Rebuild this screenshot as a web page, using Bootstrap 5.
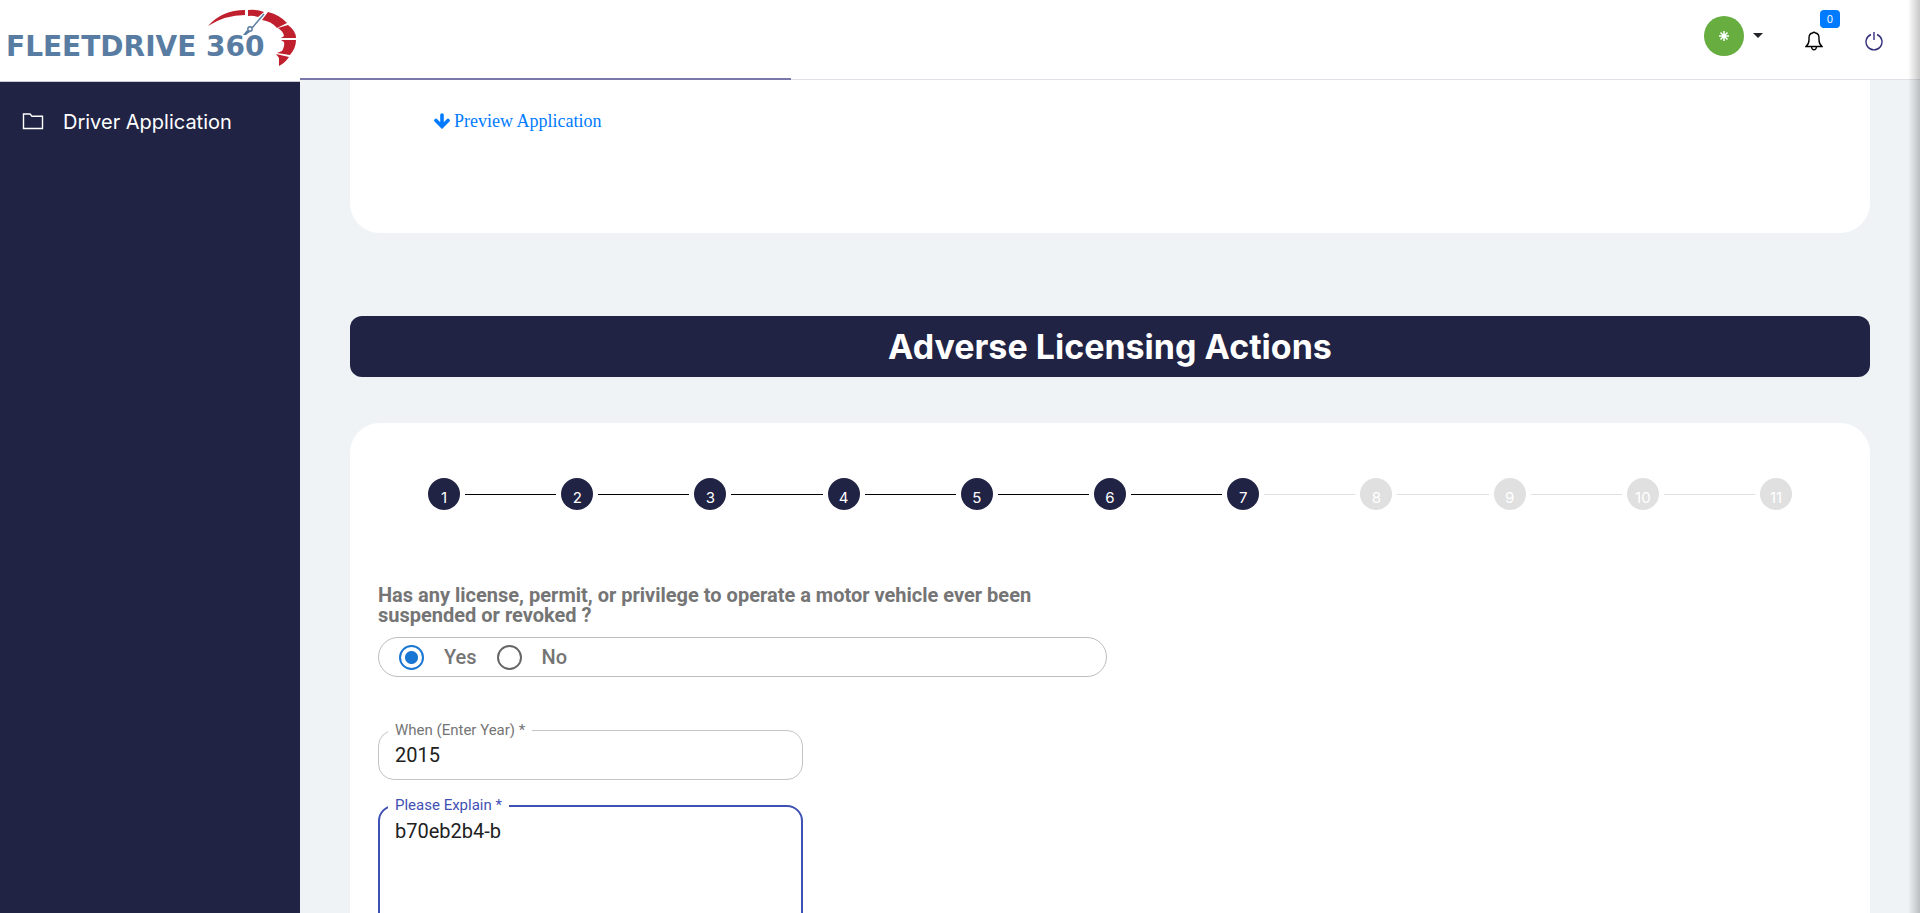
<!DOCTYPE html>
<html lang="en">
<head>
<meta charset="utf-8">
<meta name="viewport" content="width=device-width, initial-scale=1">
<title>FleetDrive 360 - Driver Application</title>
<link href="https://cdn.jsdelivr.net/npm/bootstrap@5.3.0/dist/css/bootstrap.min.css" rel="stylesheet">
<style>
  :root { --navy: #212344; --indigo: #3f51b5; --page: #eff3f6; }
  body { font-family: Inter, "Liberation Sans", sans-serif; background: var(--page); }
  .side-column { width: 300px; background: var(--navy); }
  .brand-link { height: 82px; border-bottom: 1px solid #c9cad3; }
  .brand-link svg { width: 300px; height: 76px; }
  .brand-word { font: bold 28px "DejaVu Sans", sans-serif; fill: #587ca2; }
  .side-link { color: #fff; font-size: 20px; line-height: 24px; padding: 28px 22px; gap: 19px; }
  .top-bar { height: 80px; border-bottom: 1px solid #dee2e6; padding: 0 37px 8px 0; gap: 42px; }
  .load-line { height: 2px; width: 491px; background: #7a78ab; left: 0; bottom: -1px; }
  .avatar { width: 40px; height: 40px; background: #67ad3f; }
  .user-toggle { color: #212529; gap: 9px; }
  .caret { border: 5px solid transparent; border-top-color: #212529; border-bottom: 0; }
  .count { left: 15px; top: -18px; width: 20px; height: 18px; font-size: 10px; line-height: 18px; background: #007bff; }
  .content { padding: 0 50px; }
  .panel { background: #fff; }
  .panel-top { border-radius: 0 0 30px 30px; height: 153px; padding: 28px 84px; }
  .preview { color: #007bff; font: 18px/26px "Liberation Serif", serif; }
  .section-title { background: var(--navy); border-radius: 12px; margin: 83px 0 46px; font-size: 34px; line-height: 61px; }
  .panel-form { border-radius: 30px 30px 0 0; padding: 55px 28px 0; }
  .steps { padding: 0 50px; margin-bottom: 75px; }
  .step-dot { width: 32px; height: 32px; background: #e0e0e0; font-size: 15px; line-height: 40px; }
  .step-line { height: 1px; background: #e0e0e0; margin: 0 5px; }
  .step-dot.done { background: var(--navy); }
  .step-line.done { background: #000; }
  .form-area { font-family: Roboto, sans-serif; font-size: 20px; color: #757575; }
  .question { width: 729px; margin-bottom: 53px; }
  .question legend { font-size: 20px; line-height: 20px; width: 700px; margin-bottom: 12px; }
  .choice-box { height: 40px; border: 1px solid #bdbdbd; border-radius: 20px; padding: 0 20px; }
  .choice { font-weight: 500; gap: 20px; margin-right: 20px; }
  .choice input { appearance: none; width: 25px; height: 25px; margin: 0; border: 2px solid #666; border-radius: 50%; }
  .choice input:checked { border-color: #1976d2; background: radial-gradient(circle, #1976d2 6px, transparent 7px); }
  .outlined { width: 425px; margin-bottom: 25px; }
  .outlined label { left: 10px; top: -10px; padding: 0 7px; background: #fff; font-size: 15px; line-height: 20px; }
  .outlined .box { display: block; width: 100%; border: 1px solid #c4c4c4; border-radius: 16px; padding: 0 16px; color: #212121; background: #fff; outline: 0; }
  .outlined input.box { height: 50px; }
  .outlined textarea.box { height: 160px; padding: 9px 15px; border: 2px solid var(--indigo); line-height: 30px; resize: none; }
  .outlined.active label { color: var(--indigo); }
  .edge-shadow { width: 12px; background: linear-gradient(to left, rgba(0,0,0,.22), transparent); }
</style>
</head>
<body>
<div class="d-flex vh-100 overflow-hidden position-relative">
  <aside class="side-column flex-shrink-0">
    <a href="#" class="brand-link d-block bg-white" aria-label="FleetDrive 360">
      <svg viewBox="0 0 300 76">
        <text class="brand-word" x="6" y="56">FLEETDRIVE 360</text>
        <g fill="#c01f2e">
          <path d="M208 26Q222 10 245 10V15Q225 15 208 26Z"/>
          <path d="M248 10Q257 9 264 12L258 17Q253 15 248 16Z"/>
          <path d="M268 12Q280 15 287 23L277 28Q271 21 262 20Z"/>
          <path d="M288 25Q296 31 296 38H281L284 36Q283 31 278 28Z"/>
          <path d="M296 40Q296 48 290 55L277 53L282 51Q285 46 284 42L281 40Z"/>
          <path d="M289 57Q285 63 279 66V58L276 54Z"/>
        </g>
        <path d="M264 14L252 28" stroke="#587ca2" stroke-width="1.5"/>
        <circle cx="250" cy="29" r="2.2" fill="#fff" stroke="#587ca2" stroke-width="1.4"/>
        <path d="M247 30L243 35H246L250 32Z" fill="#587ca2"/>
      </svg>
    </a>
    <nav>
      <a href="#" class="side-link d-flex align-items-center text-decoration-none">
        <svg width="22" height="18" viewBox="0 0 22 18" fill="none" stroke="#fff" stroke-width="1.4"><path d="M1.5 15.5V1H8L10 3.200H20.500V15.500Z"/></svg>
        <span>Driver Application</span>
      </a>
    </nav>
  </aside>

  <div class="flex-grow-1 d-flex flex-column">
    <header class="top-bar bg-white d-flex align-items-center justify-content-end position-relative flex-shrink-0">
      <button type="button" class="user-toggle btn p-0 border-0 d-flex align-items-center" aria-label="Account menu">
        <span class="avatar rounded-circle d-flex align-items-center justify-content-center"><svg width="10" height="10" viewBox="0 0 10 10" stroke="#fff" stroke-width="1.500"><path d="M5 0V10M0 5H10M1.500 1.500L8.500 8.500M8.500 1.500L1.500 8.500"/></svg></span>
        <span class="caret"></span>
      </button>
      <button type="button" class="btn p-0 border-0 position-relative mt-2" aria-label="Notifications">
        <svg width="18" height="20" viewBox="0 0 18 20" fill="none" stroke="#000" stroke-width="1.400"><path d="M1 15.500H17Q14 13 14 9V7Q14 2.500 10.500 2Q9 .5 7.500 2Q4 2.500 4 7V9Q4 13 1 15.500ZM6.500 16Q7 18.800 9 18.800T11.500 16"/></svg>
        <span class="count position-absolute rounded-1 text-white">0</span>
      </button>
      <button type="button" class="btn p-0 border-0 mt-2" aria-label="Log out">
        <svg width="18" height="20" viewBox="0 0 18 20" fill="none" stroke="#34317c" stroke-width="1.400"><path d="M6 3.500A8 8 0 1 0 12 3.500M9 1V9"/></svg>
      </button>
      <div class="load-line position-absolute"></div>
    </header>

    <main class="content">
      <section class="panel panel-top">
        <a href="#" class="preview d-inline-flex align-items-center gap-1 text-decoration-none">
          <svg width="16" height="16" viewBox="0 0 16 16" fill="none" stroke="#007bff" stroke-width="3.600" stroke-linecap="round"><path d="M8 2V12M2 7.500L8 13.500L14 7.500"/></svg>Preview Application</a>
      </section>
      <h1 class="section-title text-white text-center fw-bold">Adverse Licensing Actions</h1>
      <section class="panel panel-form">
        <div class="steps d-flex align-items-center text-white text-center">
          <span class="step-dot done rounded-circle">1</span><span class="step-line done flex-fill"></span>
          <span class="step-dot done rounded-circle">2</span><span class="step-line done flex-fill"></span>
          <span class="step-dot done rounded-circle">3</span><span class="step-line done flex-fill"></span>
          <span class="step-dot done rounded-circle">4</span><span class="step-line done flex-fill"></span>
          <span class="step-dot done rounded-circle">5</span><span class="step-line done flex-fill"></span>
          <span class="step-dot done rounded-circle">6</span><span class="step-line done flex-fill"></span>
          <span class="step-dot done rounded-circle">7</span><span class="step-line flex-fill"></span>
          <span class="step-dot rounded-circle">8</span><span class="step-line flex-fill"></span>
          <span class="step-dot rounded-circle">9</span><span class="step-line flex-fill"></span>
          <span class="step-dot rounded-circle">10</span><span class="step-line flex-fill"></span>
          <span class="step-dot rounded-circle">11</span>
        </div>
        <form class="form-area">
          <fieldset class="question">
            <legend class="fw-bold">Has any license, permit, or privilege to operate a motor vehicle ever been suspended or revoked ?</legend>
            <div class="choice-box d-flex align-items-center">
              <label class="choice d-flex align-items-center"><input type="radio" name="revoked" checked>Yes</label>
              <label class="choice d-flex align-items-center"><input type="radio" name="revoked">No</label>
            </div>
          </fieldset>
          <div class="outlined position-relative">
            <label for="year" class="position-absolute">When (Enter Year) *</label>
            <input id="year" type="text" class="box" value="2015">
          </div>
          <div class="outlined active position-relative">
            <label for="explain" class="position-absolute">Please Explain *</label>
            <textarea id="explain" class="box">b70eb2b4-b</textarea>
          </div>
        </form>
      </section>
    </main>
  </div>
  <div class="edge-shadow position-absolute top-0 end-0 h-100"></div>
</div>
<script src="https://cdn.jsdelivr.net/npm/bootstrap@5.3.0/dist/js/bootstrap.bundle.min.js"></script>
</body>
</html>
